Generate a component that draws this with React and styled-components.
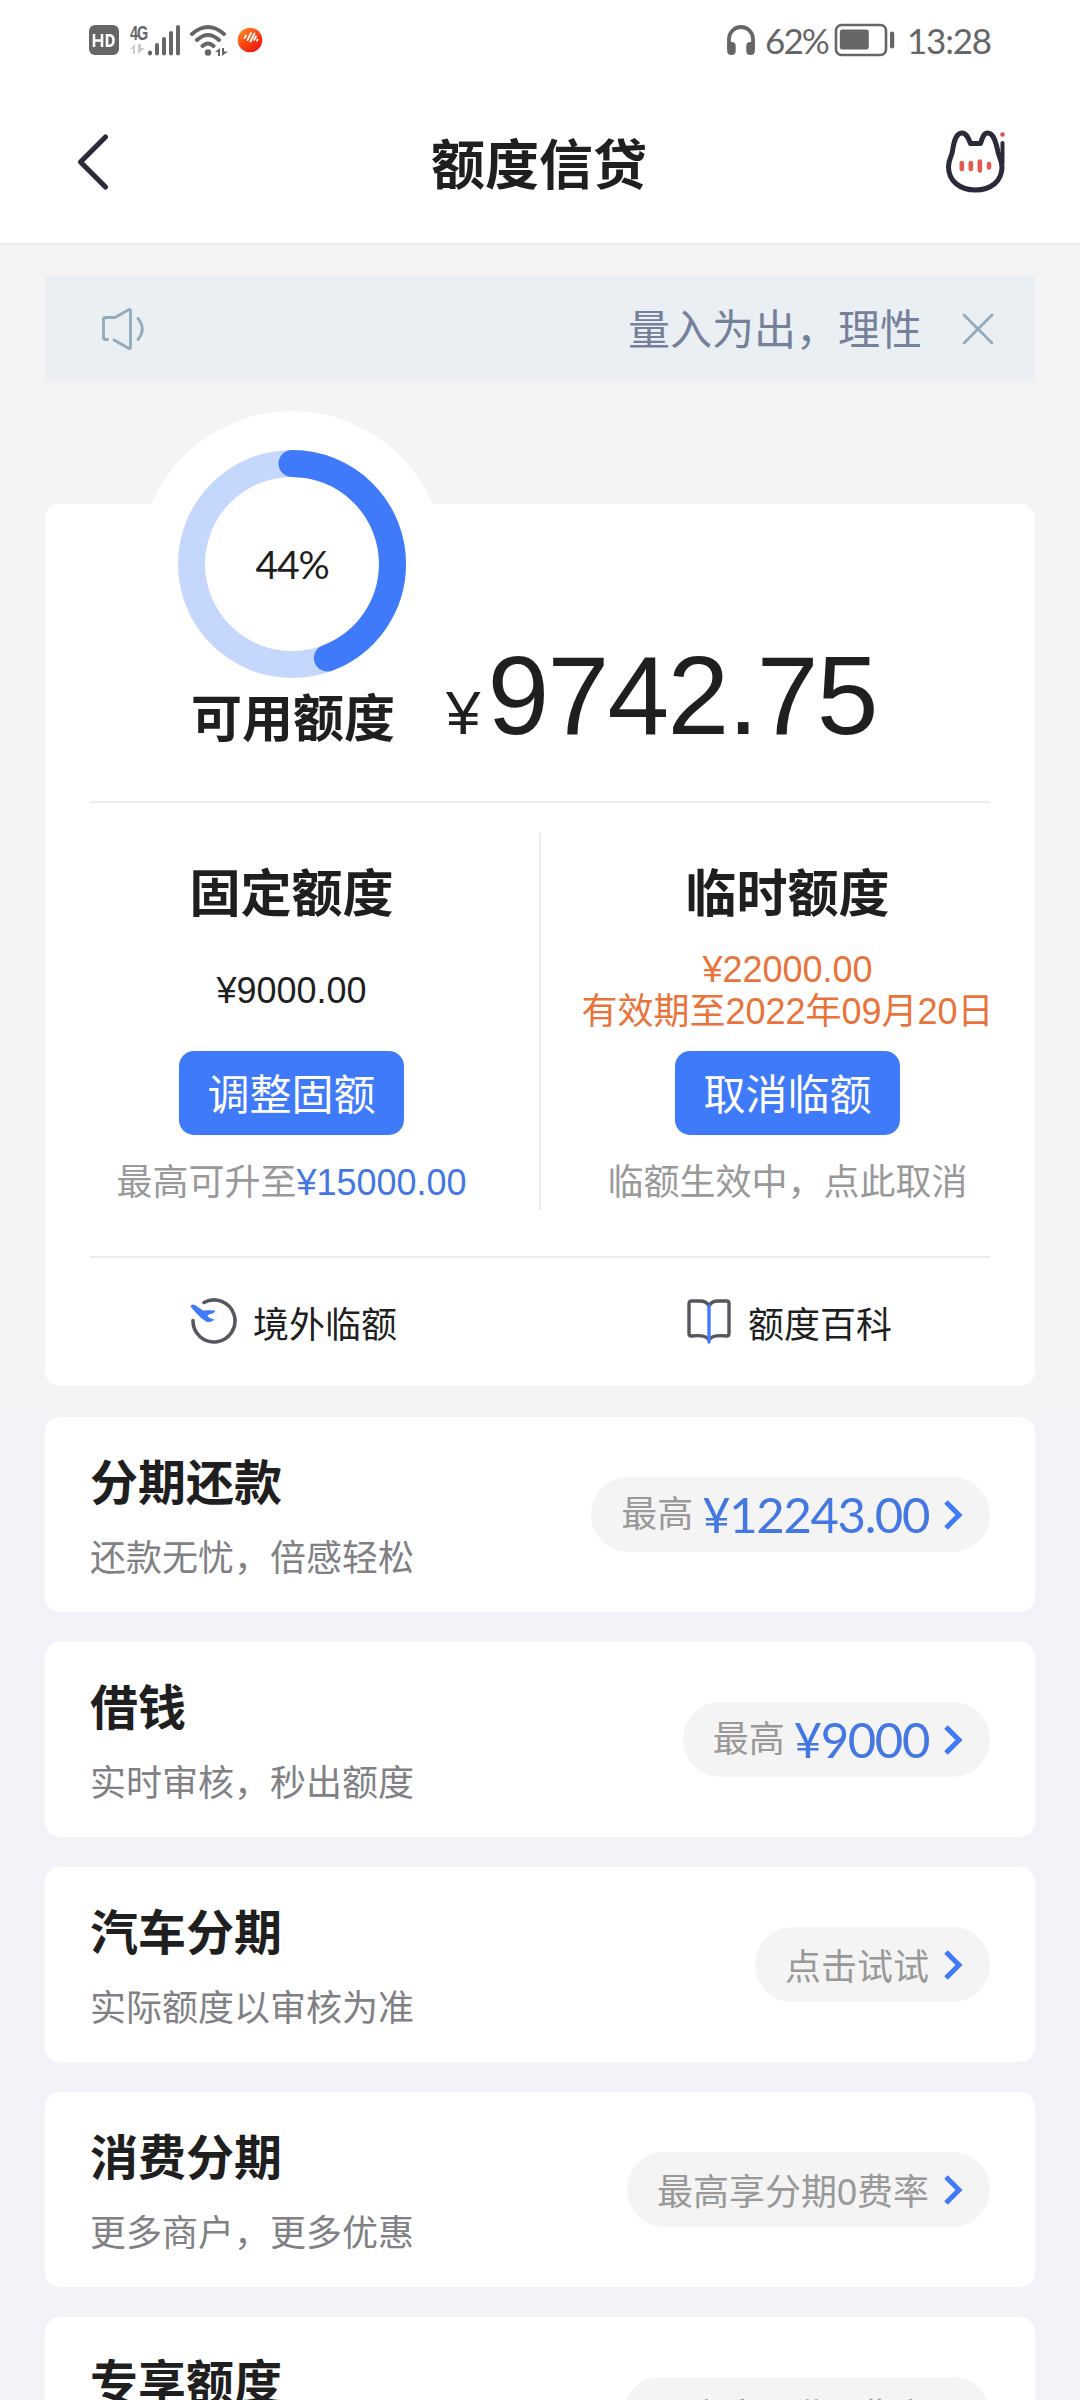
import React from "react";
import styled, { createGlobalStyle } from "styled-components";

const GlobalStyle = createGlobalStyle`
  * {
    box-sizing: border-box;
  }
  body {
    margin: 0;
    background: #f2f3f8;
    color: #1f1f1f;
    font-family: "Liberation Sans", "Noto Sans CJK SC", sans-serif;
  }
  p, h1, h2, h3 {
    margin: 0;
  }
  svg {
    display: block;
    flex: none;
  }
`;

const Page = styled.div`
  width: 1080px;
  height: 2400px;
  overflow: hidden;
`;

const StatusBar = styled.div`
  display: flex;
  justify-content: space-between;
  height: 80px;
  padding: 0 90px 0 88px;
  background: #fff;
  color: #666;
`;

const StatusGroup = styled.div`
  display: flex;
  align-items: center;
  height: 79px;
`;

const StatusText = styled.span`
  width: ${({ $width }) => $width};
  margin-left: ${({ $left }) => $left};
  font-family: Lato, sans-serif;
  font-size: 35px;
  line-height: 40px;
  letter-spacing: ${({ $spacing }) => $spacing};
  white-space: nowrap;
`;

const NavBar = styled.header`
  display: grid;
  grid-template-columns: 1fr auto 1fr;
  align-items: center;
  height: 165px;
  padding: 0 72px 0 70px;
  background: #fff;
  border-bottom: 2px solid #ececec;

  h1 {
    padding-top: 8px;
    font-size: 54px;
    font-weight: 700;
    line-height: 80px;
  }
`;

const NavButton = styled.button`
  display: flex;
  justify-self: ${({ $end }) => ($end ? "end" : "start")};
  padding: 0;
  border: 0;
  background: none;
`;

const Overview = styled.section`
  height: 1171px;
  padding: 31px 45px 0;
  background: #f4f4f4;
`;

const Notice = styled.div`
  display: flex;
  align-items: center;
  height: 105px;
  padding: 0 41px 0 55px;
  background: #e9eff3;
`;

const NoticeText = styled.p`
  flex: 1;
  margin: 0 40px 0 20px;
  padding-top: 5px;
  overflow: hidden;
  color: #75809b;
  font-size: 42px;
  line-height: 60px;
  text-align: right;
  white-space: nowrap;
`;

const LimitCard = styled.div`
  position: relative;
  height: 882px;
  margin-top: 123px;
  padding-top: 130px;
  border-radius: 15px;
  background: #fff;
`;

// Ring that sticks out above the card edge
const Gauge = styled.div`
  position: absolute;
  top: -93px;
  left: 94px;
  display: grid;
  place-items: center;
  width: 306px;
  height: 306px;
  border-radius: 50%;
  background: #fff;

  svg,
  span {
    grid-area: 1 / 1;
  }
  span {
    font-family: Lato, sans-serif;
    font-size: 39px;
    letter-spacing: -1.2px;
  }
`;

const Title = styled.h2`
  font-size: 51px;
  font-weight: 700;
  line-height: 74px;
`;

const Available = styled.div`
  position: relative;
  display: flex;
  align-items: baseline;
  height: 167px;
  padding-left: 146px;

  ${Title} {
    align-self: flex-start;
    margin-top: 49px;
  }
`;

const Currency = styled.span`
  margin-left: 51px;
  font-size: 62px;
`;

const Amount = styled.span`
  margin-left: 7px;
  font-size: 111px;
  line-height: 124px;
  letter-spacing: -1.7px;
`;

const Divider = styled.div`
  height: 2px;
  margin: 0 45px;
  background: #ececec;
`;

const Columns = styled.div`
  position: relative;
  display: grid;
  grid-template-columns: 493px 495px;
  gap: 2px;
  height: 453px;

  &::after {
    content: "";
    position: absolute;
    top: 30px;
    left: 494px;
    width: 2px;
    height: 377px;
    background: #ececec;
  }
`;

const Column = styled.div`
  display: flex;
  flex-direction: column;
  align-items: center;
  padding-top: 55px;
`;

const Quota = styled.div`
  display: flex;
  flex-direction: column;
  justify-content: center;
  height: 84px;
  margin-top: 17px;
  color: ${({ $warn }) => ($warn ? "#e8743b" : "#1f1f1f")};
  font-size: 36px;
  line-height: 42px;
  text-align: center;
  white-space: nowrap;
`;

const Button = styled.button`
  width: 225px;
  height: 84px;
  margin-top: 18px;
  padding: 5px 0 0;
  border: 0;
  border-radius: 15px;
  background: #3f7afa;
  color: #fff;
  font: inherit;
  font-size: 42px;
  line-height: 79px;
`;

const Hint = styled.p`
  margin-top: 21px;
  color: #999;
  font-size: 36px;
  line-height: 54px;
  white-space: nowrap;

  b {
    color: #4477e2;
    font-weight: 400;
  }
`;

const Links = styled.div`
  display: grid;
  grid-template-columns: 1fr 1fr;
  height: 128px;
`;

const LinkItem = styled.div`
  display: flex;
  align-items: center;
  gap: ${({ $gap }) => $gap};
  padding-left: ${({ $left }) => $left};
  font-size: 36px;
`;

const ProductList = styled.section`
  display: flex;
  flex-direction: column;
  gap: 30px;
  padding: 1px 45px 0;
`;

const ProductCard = styled.article`
  display: flex;
  align-items: center;
  justify-content: space-between;
  flex: none;
  height: 195px;
  padding: 0 45px;
  border-radius: 15px;
  background: #fff;

  h3 {
    padding-top: 9px;
    font-size: 48px;
    font-weight: 700;
    line-height: 70px;
  }
  p {
    margin-top: 10px;
    color: #808085;
    font-size: 36px;
    line-height: 60px;
  }
`;

const Pill = styled.div`
  display: flex;
  align-items: center;
  height: 75px;
  padding: 0 25px 0 30px;
  border-radius: 38px;
  background: #f4f4f4;
  color: #999;
  font-size: 36px;
  line-height: 75px;

  strong {
    margin-left: 9px;
    color: #4477e2;
    font-family: Lato, sans-serif;
    font-size: 49px;
    font-weight: 400;
    letter-spacing: -1.35px;
  }
  svg {
    margin-left: 14px;
  }
`;

const PillLabel = styled.span`
  padding-top: ${({ $alone }) => ($alone ? "5px" : "0")};
`;

const HdIcon = () => (
  <svg width="32" height="32" viewBox="0 0 32 32">
    <rect x="1" y="1" width="30" height="30" rx="6" fill="#666" />
    <path
      d="M6 10v13M14 10v13M6 16.5h8M19 11.300v10.400h2.500q4 0 4-5.200t-4-5.200z"
      fill="none"
      stroke="#fff"
      strokeWidth="2.600"
    />
  </svg>
);

const Network = styled.div`
  display: flex;
  flex-direction: column;
  width: 17px;
  margin-left: 10px;
  font-family: "Liberation Sans", sans-serif;
  font-size: 20px;
  font-weight: 700;
  line-height: 19px;
  letter-spacing: -1.5px;

  span {
    transform: scaleX(0.72);
    transform-origin: left;
  }
`;

const DataArrows = ({ color }) => (
  <svg width="15" height="12" viewBox="0 0 15 12">
    <path d="M5 1v10H3V6H0zM8 1v10l7-6h-4V1z" fill={color} />
  </svg>
);

const SignalIcon = () => (
  <svg width="42" height="32" viewBox="0 0 42 32">
    <g stroke="#666" strokeWidth="4" strokeLinecap="round">
      <path d="M3 28.500v1M10 21v8.500M17 15v14.500M24 9v20.500M31 3v26.500" />
    </g>
  </svg>
);

const WifiIcon = () => (
  <svg width="40" height="34" viewBox="0 0 40 34">
    <g fill="none" stroke="#666" strokeWidth="4" strokeLinecap="round">
      <path d="M3 11Q19 -3 35 11M8 17Q19 7 30 17M13.500 23Q19 18 24.500 23" />
    </g>
    <circle cx="19" cy="29.500" r="3.200" fill="#666" />
    <path d="M31 25v8h-2v-4h-3zM33 25v8l6-4.500h-4V25z" fill="#666" />
  </svg>
);

const NewsIcon = () => (
  <svg width="34" height="26" viewBox="-8 0 34 26">
    <defs>
      <linearGradient id="ball" x1="0" y1="0" x2="0.8" y2="1">
        <stop offset="0" stopColor="#ff9a2e" />
        <stop offset="0.500" stopColor="#fb4a12" />
        <stop offset="1" stopColor="#ee1212" />
      </linearGradient>
    </defs>
    <circle cx="13" cy="13" r="12.300" fill="url(#ball)" />
    <path
      d="M7.500 11l1.500-2.500M10.500 13l3.500-7M13.500 14.500l4-8M17 13l2-3.500M20 13.500l.5-1"
      stroke="#fff"
      strokeWidth="1.800"
      strokeLinecap="round"
    />
  </svg>
);

const HeadphoneIcon = () => (
  <svg width="30" height="32" viewBox="0 0 30 32">
    <path d="M3 25V15a12 12 0 0 1 24 0v10" fill="none" stroke="#666" strokeWidth="3.800" />
    <rect x="1.200" y="18" width="8.500" height="13" rx="4" fill="#666" />
    <rect x="20.300" y="18" width="8.500" height="13" rx="4" fill="#666" />
  </svg>
);

const BatteryIcon = () => (
  <svg width="62" height="34" viewBox="0 0 62 34">
    <rect x="2" y="2" width="50" height="30" rx="5.500" fill="none" stroke="#666" strokeWidth="2.600" />
    <rect x="5.800" y="6.500" width="29" height="20" rx="2.500" fill="#666" />
    <rect x="56" y="8.500" width="4.200" height="17" rx="2" fill="#666" />
  </svg>
);

const BackIcon = () => (
  <svg width="42" height="60" viewBox="0 0 42 60">
    <path
      d="M35.500 5L10.500 30L35.500 55"
      fill="none"
      stroke="#2b2a3a"
      strokeWidth="5.200"
      strokeLinecap="round"
      strokeLinejoin="round"
    />
  </svg>
);

const CatIcon = () => (
  <svg width="64" height="66" viewBox="0 0 64 66">
    <g fill="none" stroke="#2b2a3a" strokeWidth="5" strokeLinecap="round" strokeLinejoin="round">
      <path d="M26.500 14.500C24 8 22 4 18 4C12 4 10 12 8.500 22C8 27 4.500 30 4.500 38C4.500 52 16 61 31.500 61S58 52 58 38C58 32 55.500 29 54 23C52 13 49.500 4 43.500 4C40 4 38.500 8 36.500 14.500z" />
      <path d="M58.500 14v20" strokeWidth="4" />
    </g>
    <circle cx="58.500" cy="5.500" r="2.300" fill="#e0504b" />
    <g stroke="#e45a4c" strokeWidth="4.600" strokeLinecap="round">
      <path d="M17.800 34v6M26.800 34v6M35.800 32.500v9M45 35v3.500" />
    </g>
  </svg>
);

const SpeakerIcon = () => (
  <svg width="46" height="44" viewBox="0 0 46 44">
    <g fill="none" stroke="#92aabb" strokeWidth="2.800" strokeLinecap="round" strokeLinejoin="round">
      <path d="M7.500 32.500H5.500Q3.500 32.500 3.500 30.500V12.500Q3.500 10.500 5.500 10.500H15L29 2.500Q30.500 2 30.500 4V40Q30.500 42 29 41.500L14 33" />
      <path d="M38 11.500Q46.500 22 38 32.500" />
    </g>
  </svg>
);

const CloseIcon = () => (
  <svg width="32" height="32" viewBox="0 0 32 32">
    <path d="M2 2L30 30M30 2L2 30" stroke="#92aabb" strokeWidth="2.800" strokeLinecap="round" />
  </svg>
);

const PlaneIcon = () => (
  <svg width="50" height="50" viewBox="0 0 50 50">
    <path
      d="M15 5.500A21 21 0 1 1 4 23.500"
      fill="none"
      stroke="#56565f"
      strokeWidth="3.600"
      strokeLinecap="round"
    />
    <path
      d="M1.500 9.500Q2.500 6.500 6 8L14 13.500Q21 13 26 13.500Q27 16 19.500 17.500L18.500 19Q20.500 22 25 22Q24.500 25 19 25Q14 24.500 1.500 9.500z"
      fill="#3f7afa"
    />
  </svg>
);

const BookIcon = () => (
  <svg width="46" height="48" viewBox="0 0 46 48">
    <g fill="none" stroke="#56565f" strokeWidth="3.400" strokeLinejoin="round">
      <path d="M23 8Q20.500 3 14 3H5.500Q3 3 3 5.500V35.500Q3 38 5.500 38Q20 36.500 23 42" />
      <path d="M23 8Q25.500 3 32 3H40.500Q43 3 43 5.500V35.500Q43 38 40.500 38Q26 36.500 23 42" />
    </g>
    <path d="M23 8V44" stroke="#3f7afa" strokeWidth="3.400" strokeLinecap="round" />
  </svg>
);

const ArrowIcon = () => (
  <svg width="22" height="32" viewBox="0 0 22 32">
    <path d="M3 3L16 16L3 29" fill="none" stroke="#3f7afa" strokeWidth="5" />
  </svg>
);

const RADIUS = 100.5;
const CIRCLE = 2 * Math.PI * RADIUS;

const Ring = ({ percent }) => (
  <svg width="228" height="228" viewBox="0 0 228 228">
    <g fill="none" strokeWidth="27" transform="rotate(-90 114 114)">
      <circle cx="114" cy="114" r={RADIUS} stroke="#c5d7fd" />
      <circle
        cx="114"
        cy="114"
        r={RADIUS}
        stroke="#3f7afa"
        strokeLinecap="round"
        strokeDasharray={`${(CIRCLE * percent) / 100} ${CIRCLE}`}
      />
    </g>
  </svg>
);

const products = [
  { title: "分期还款", desc: "还款无忧，倍感轻松", label: "最高", amount: "¥12243.00" },
  { title: "借钱", desc: "实时审核，秒出额度", label: "最高", amount: "¥9000" },
  { title: "汽车分期", desc: "实际额度以审核为准", label: "点击试试" },
  { title: "消费分期", desc: "更多商户，更多优惠", label: "最高享分期0费率" },
  { title: "专享额度", desc: "专属额度，专享优惠", label: "最高享12期0费率" },
];

const App = () => {
  return (
    <>
      <GlobalStyle />
      <Page>
        <StatusBar>
          <StatusGroup>
            <HdIcon />
            <Network>
              <span>4G</span>
              <DataArrows color="#ccc" />
            </Network>
            <SignalIcon />
            <WifiIcon />
            <NewsIcon />
          </StatusGroup>
          <StatusGroup>
            <HeadphoneIcon />
            <StatusText $width="69px" $left="9px" $spacing="-1.9px">
              62%
            </StatusText>
            <BatteryIcon />
            <StatusText $width="83px" $left="11px" $spacing="-1.2px">
              13:28
            </StatusText>
          </StatusGroup>
        </StatusBar>
        <NavBar>
          <NavButton>
            <BackIcon />
          </NavButton>
          <h1>额度信贷</h1>
          <NavButton $end>
            <CatIcon />
          </NavButton>
        </NavBar>

        <Overview>
          <Notice>
            <SpeakerIcon />
            <NoticeText>量入为出，理性</NoticeText>
            <CloseIcon />
          </Notice>
          <LimitCard>
            <Gauge>
              <Ring percent={44.2} />
              <span>44%</span>
            </Gauge>
            <Available>
              <Title>可用额度</Title>
              <Currency>¥</Currency>
              <Amount>9742.75</Amount>
            </Available>
            <Divider />
            <Columns>
              <Column>
                <Title>固定额度</Title>
                <Quota>
                  <p>¥9000.00</p>
                </Quota>
                <Button>调整固额</Button>
                <Hint>
                  最高可升至<b>¥15000.00</b>
                </Hint>
              </Column>
              <Column>
                <Title>临时额度</Title>
                <Quota $warn>
                  <p>¥22000.00</p>
                  <p>有效期至2022年09月20日</p>
                </Quota>
                <Button>取消临额</Button>
                <Hint>临额生效中，点此取消</Hint>
              </Column>
            </Columns>
            <Divider />
            <Links>
              <LinkItem $left="144px" $gap="14px">
                <PlaneIcon />
                境外临额
              </LinkItem>
              <LinkItem $left="146px" $gap="16px">
                <BookIcon />
                额度百科
              </LinkItem>
            </Links>
          </LimitCard>
        </Overview>

        <ProductList>
          {products.map((item) => (
            <ProductCard key={item.title}>
              <div>
                <h3>{item.title}</h3>
                <p>{item.desc}</p>
              </div>
              <Pill>
                <PillLabel $alone={!item.amount}>{item.label}</PillLabel>
                {item.amount && <strong>{item.amount}</strong>}
                <ArrowIcon />
              </Pill>
            </ProductCard>
          ))}
        </ProductList>
      </Page>
    </>
  );
};

export default App;
